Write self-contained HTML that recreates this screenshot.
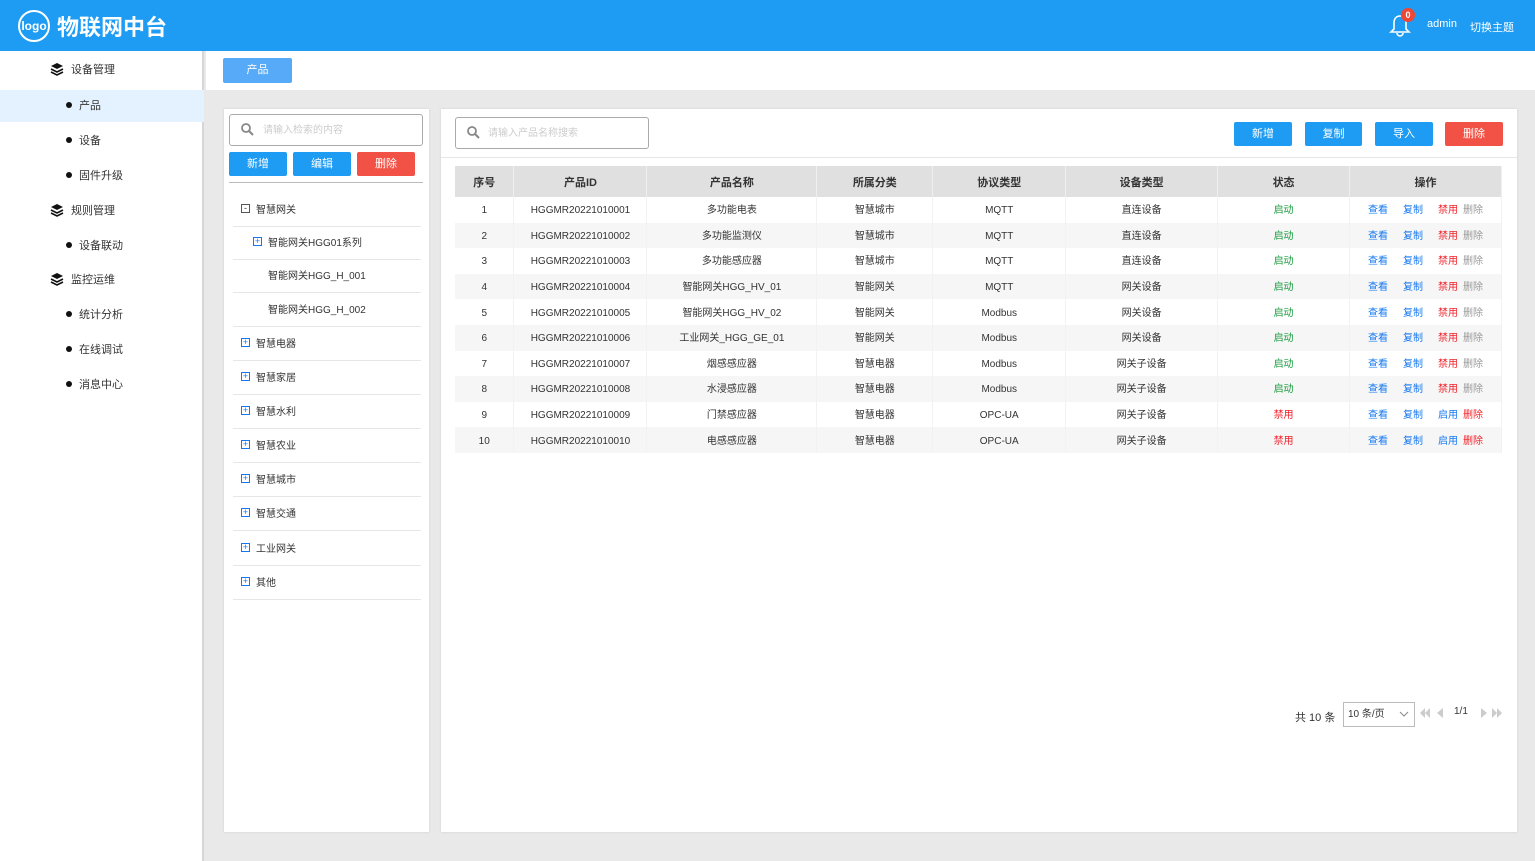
<!DOCTYPE html>
<html><head><meta charset="utf-8"><style>
*{margin:0;padding:0;box-sizing:border-box}
body{width:1535px;height:861px;overflow:hidden;font-family:"Liberation Sans","Noto Sans CJK SC",sans-serif;font-size:11px;color:#333;background:#e9e9e9;position:relative}
.abs{position:absolute}
.hdr{left:0;top:0;width:1535px;height:51px;background:#1e9cf3;color:#fff}
.side{left:0;top:51px;width:204px;height:810px;background:#fff;border-right:2px solid #d6d6d6}
.mi{position:absolute;left:0;width:204px;height:32px;line-height:33px;font-size:11px}
.mi svg{vertical-align:middle;margin-right:7px;position:relative;top:-1px}
.dot{display:inline-block;width:6px;height:6px;border-radius:3px;background:#111;margin-right:7px;vertical-align:middle;position:relative;top:-1px}
.btn{position:absolute;color:#fff;text-align:center;font-size:11px;border-radius:2px}
.blue{background:#1e9cf3}.red{background:#f25245}
table{border-collapse:collapse;position:absolute;left:455px;top:166px;width:1047px;font-size:10px}
th{background:#e0e0e0;height:31px;font-weight:bold;font-size:11px;border-right:1px solid #efefef;color:#333}
td{height:25.6px;line-height:14px;padding-top:3px;text-align:center;border-right:1px solid #f2f2f2;color:#333;vertical-align:middle}
tr:nth-child(odd) td{background:#f6f6f6}
.g{color:#1a9c3f}.r{color:#f0222a}.b{color:#1678f0}.gr{color:#999}
.tr{position:absolute;left:233px;width:188px;border-bottom:1px solid #e6e6e6;height:34px;line-height:36px;font-size:10px}
.pl{display:inline-block;width:9px;height:9px;border:1px solid #555;font-size:9px;line-height:7px;text-align:center;margin:0 6px 0 8px;vertical-align:middle;position:relative;top:-2px}
.pb{border-color:#1678f0;color:#1678f0}
</style></head><body>
<div class="abs hdr">
 <div class="abs" style="left:18px;top:10px;width:32px;height:32px;border:2px solid #fff;border-radius:50%;font-size:12px;line-height:28px;text-align:center;font-weight:bold">logo</div>
 <div class="abs" style="left:57px;top:14px;font-size:22px;font-weight:bold;line-height:28px">物联网中台</div>
 <svg class="abs" style="left:1389px;top:14px" width="22" height="24" viewBox="0 0 22 24"><path d="M11 2c-4 0-6 3-6 7v6l-3 3h18l-3-3V9c0-4-2-7-6-7z M8 19a3 3 0 0 0 6 0" fill="none" stroke="#fff" stroke-width="1.6"/></svg>
 <div class="abs" style="left:1401px;top:8px;width:14px;height:14px;border-radius:7px;background:#f04634;font-size:9px;line-height:14px;text-align:center;font-weight:bold">0</div>
 <div class="abs" style="left:1427px;top:18px;font-size:11px">admin</div>
 <div class="abs" style="left:1470px;top:19px;font-size:11px">切换主题</div>
</div>
<div class="abs side">
 <div class="mi" style="top:3px;padding-left:50px"><svg width="14" height="14" viewBox="0 0 14 14"><path d="M7 1L1 4l6 3 6-3z" fill="#111"/><path d="M1 7l6 3 6-3M1 10l6 3 6-3" fill="none" stroke="#111" stroke-width="1.6"/></svg>设备管理</div>
 <div class="mi" style="top:39px;padding-left:66px;background:#e3f2fe"><span class="dot"></span>产品</div>
 <div class="mi" style="top:74px;padding-left:66px"><span class="dot"></span>设备</div>
 <div class="mi" style="top:109px;padding-left:66px"><span class="dot"></span>固件升级</div>
 <div class="mi" style="top:144px;padding-left:50px"><svg width="14" height="14" viewBox="0 0 14 14"><path d="M7 1L1 4l6 3 6-3z" fill="#111"/><path d="M1 7l6 3 6-3M1 10l6 3 6-3" fill="none" stroke="#111" stroke-width="1.6"/></svg>规则管理</div>
 <div class="mi" style="top:179px;padding-left:66px"><span class="dot"></span>设备联动</div>
 <div class="mi" style="top:213px;padding-left:50px"><svg width="14" height="14" viewBox="0 0 14 14"><path d="M7 1L1 4l6 3 6-3z" fill="#111"/><path d="M1 7l6 3 6-3M1 10l6 3 6-3" fill="none" stroke="#111" stroke-width="1.6"/></svg>监控运维</div>
 <div class="mi" style="top:248px;padding-left:66px"><span class="dot"></span>统计分析</div>
 <div class="mi" style="top:283px;padding-left:66px"><span class="dot"></span>在线调试</div>
 <div class="mi" style="top:318px;padding-left:66px"><span class="dot"></span>消息中心</div>
</div>
<div class="abs" style="left:206px;top:51px;width:1329px;height:39px;background:#fff"></div>
<div class="btn" style="left:223px;top:58px;width:69px;height:25px;line-height:25px;background:#56aaf7">产品</div>

<div class="abs" style="left:224px;top:109px;width:205px;height:723px;background:#fff;box-shadow:0 0 2px #ccc"></div>
<div class="abs" style="left:229px;top:114px;width:194px;height:32px;border:1px solid #aaa;border-radius:3px;color:#ccc;font-size:10px;line-height:32px;padding-left:33px">请输入检索的内容</div>
<svg class="abs" style="left:240px;top:122px" width="14" height="14"><circle cx="6" cy="6" r="4" fill="none" stroke="#888" stroke-width="1.8"/><path d="M9 9l4 4" stroke="#888" stroke-width="2"/></svg>
<div class="btn blue" style="left:229px;top:152px;width:58px;height:24px;line-height:24px">新增</div>
<div class="btn blue" style="left:293px;top:152px;width:58px;height:24px;line-height:24px">编辑</div>
<div class="btn red" style="left:357px;top:152px;width:58px;height:24px;line-height:24px">删除</div>
<div class="abs" style="left:229px;top:182px;width:194px;height:1px;background:#bbb"></div>
<div class="tr" style="top:193px"><span class="pl">-</span>智慧网关</div>
<div class="tr" style="top:226px;padding-left:12px"><span class="pl pb">+</span>智能网关HGG01系列</div>
<div class="tr" style="top:259px;padding-left:35px">智能网关HGG_H_001</div>
<div class="tr" style="top:293px;padding-left:35px">智能网关HGG_H_002</div>
<div class="tr" style="top:327px"><span class="pl pb">+</span>智慧电器</div>
<div class="tr" style="top:361px"><span class="pl pb">+</span>智慧家居</div>
<div class="tr" style="top:395px"><span class="pl pb">+</span>智慧水利</div>
<div class="tr" style="top:429px"><span class="pl pb">+</span>智慧农业</div>
<div class="tr" style="top:463px"><span class="pl pb">+</span>智慧城市</div>
<div class="tr" style="top:497px"><span class="pl pb">+</span>智慧交通</div>
<div class="tr" style="top:532px"><span class="pl pb">+</span>工业网关</div>
<div class="tr" style="top:566px"><span class="pl pb">+</span>其他</div>

<div class="abs" style="left:441px;top:109px;width:1076px;height:723px;background:#fff;box-shadow:0 0 2px #ccc"></div>
<div class="abs" style="left:441px;top:157px;width:1076px;height:1px;background:#e6e6e6"></div>
<div class="abs" style="left:455px;top:117px;width:194px;height:32px;border:1px solid #aaa;border-radius:3px;color:#ccc;font-size:10px;line-height:32px;padding-left:32px">请输入产品名称搜索</div>
<svg class="abs" style="left:466px;top:125px" width="14" height="14"><circle cx="6" cy="6" r="4" fill="none" stroke="#888" stroke-width="1.8"/><path d="M9 9l4 4" stroke="#888" stroke-width="2"/></svg>
<div class="btn blue" style="left:1234px;top:122px;width:58px;height:24px;line-height:24px">新增</div>
<div class="btn blue" style="left:1305px;top:122px;width:57px;height:24px;line-height:24px">复制</div>
<div class="btn blue" style="left:1375px;top:122px;width:58px;height:24px;line-height:24px">导入</div>
<div class="btn red" style="left:1445px;top:122px;width:58px;height:24px;line-height:24px">删除</div>

<table>
<colgroup><col style="width:59px"><col style="width:133px"><col style="width:170px"><col style="width:116px"><col style="width:133px"><col style="width:152px"><col style="width:132px"><col style="width:152px"></colgroup>
<tr><th>序号</th><th>产品ID</th><th>产品名称</th><th>所属分类</th><th>协议类型</th><th>设备类型</th><th>状态</th><th>操作</th></tr>
<tr><td>1</td><td>HGGMR20221010001</td><td>多功能电表</td><td>智慧城市</td><td>MQTT</td><td>直连设备</td><td class="g">启动</td><td><span class="b">查看</span>&emsp;&ensp;<span class="b">复制</span>&emsp;&ensp;<span class="r">禁用</span>&ensp;<span class="gr">删除</span></td></tr>
<tr><td>2</td><td>HGGMR20221010002</td><td>多功能监测仪</td><td>智慧城市</td><td>MQTT</td><td>直连设备</td><td class="g">启动</td><td><span class="b">查看</span>&emsp;&ensp;<span class="b">复制</span>&emsp;&ensp;<span class="r">禁用</span>&ensp;<span class="gr">删除</span></td></tr>
<tr><td>3</td><td>HGGMR20221010003</td><td>多功能感应器</td><td>智慧城市</td><td>MQTT</td><td>直连设备</td><td class="g">启动</td><td><span class="b">查看</span>&emsp;&ensp;<span class="b">复制</span>&emsp;&ensp;<span class="r">禁用</span>&ensp;<span class="gr">删除</span></td></tr>
<tr><td>4</td><td>HGGMR20221010004</td><td>智能网关HGG_HV_01</td><td>智能网关</td><td>MQTT</td><td>网关设备</td><td class="g">启动</td><td><span class="b">查看</span>&emsp;&ensp;<span class="b">复制</span>&emsp;&ensp;<span class="r">禁用</span>&ensp;<span class="gr">删除</span></td></tr>
<tr><td>5</td><td>HGGMR20221010005</td><td>智能网关HGG_HV_02</td><td>智能网关</td><td>Modbus</td><td>网关设备</td><td class="g">启动</td><td><span class="b">查看</span>&emsp;&ensp;<span class="b">复制</span>&emsp;&ensp;<span class="r">禁用</span>&ensp;<span class="gr">删除</span></td></tr>
<tr><td>6</td><td>HGGMR20221010006</td><td>工业网关_HGG_GE_01</td><td>智能网关</td><td>Modbus</td><td>网关设备</td><td class="g">启动</td><td><span class="b">查看</span>&emsp;&ensp;<span class="b">复制</span>&emsp;&ensp;<span class="r">禁用</span>&ensp;<span class="gr">删除</span></td></tr>
<tr><td>7</td><td>HGGMR20221010007</td><td>烟感感应器</td><td>智慧电器</td><td>Modbus</td><td>网关子设备</td><td class="g">启动</td><td><span class="b">查看</span>&emsp;&ensp;<span class="b">复制</span>&emsp;&ensp;<span class="r">禁用</span>&ensp;<span class="gr">删除</span></td></tr>
<tr><td>8</td><td>HGGMR20221010008</td><td>水浸感应器</td><td>智慧电器</td><td>Modbus</td><td>网关子设备</td><td class="g">启动</td><td><span class="b">查看</span>&emsp;&ensp;<span class="b">复制</span>&emsp;&ensp;<span class="r">禁用</span>&ensp;<span class="gr">删除</span></td></tr>
<tr><td>9</td><td>HGGMR20221010009</td><td>门禁感应器</td><td>智慧电器</td><td>OPC-UA</td><td>网关子设备</td><td class="r">禁用</td><td><span class="b">查看</span>&emsp;&ensp;<span class="b">复制</span>&emsp;&ensp;<span class="b">启用</span>&ensp;<span class="r">删除</span></td></tr>
<tr><td>10</td><td>HGGMR20221010010</td><td>电感感应器</td><td>智慧电器</td><td>OPC-UA</td><td>网关子设备</td><td class="r">禁用</td><td><span class="b">查看</span>&emsp;&ensp;<span class="b">复制</span>&emsp;&ensp;<span class="b">启用</span>&ensp;<span class="r">删除</span></td></tr>
</table>

<div class="abs" style="left:1295px;top:709px;font-size:11px">共 10 条</div>
<div class="abs" style="left:1343px;top:702px;width:72px;height:25px;border:1px solid #bbb;font-size:10px;line-height:23px;padding-left:4px">10 条/页</div>
<svg class="abs" style="left:1399px;top:710px" width="10" height="8"><path d="M1 2l4 4 4-4" fill="none" stroke="#888"/></svg>
<svg class="abs" style="left:1419px;top:707px" width="90" height="12"><g fill="#ccc"><path d="M1 6l5-5v10zM6 6l5-5v10z"/><path d="M18 6l6-5v10z"/><path d="M62 1l6 5-6 5z"/><path d="M73 1l5 5-5 5zM78 1l5 5-5 5z"/></g></svg>
<div class="abs" style="left:1454px;top:706px;font-size:10px">1/1</div>
</body></html>
